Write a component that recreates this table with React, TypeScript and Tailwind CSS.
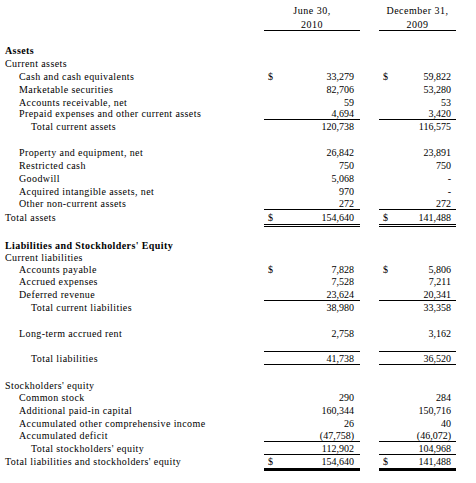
import React from 'react';

type Rule = 'none' | 'single' | 'double' | 'thick';

type Row = {
  label?: string;
  indent?: 0 | 1 | 2;
  bold?: boolean;
  a?: string;
  b?: string;
  dollar?: boolean;
  rule?: Rule;
  h: 12 | 13 | 14 | 16 | 17;
};

const heights = {
  12: 'h-[12px]',
  13: 'h-[13px]',
  14: 'h-[14px]',
  16: 'h-[16px]',
  17: 'h-[17px]',
};

const indents = {
  0: 'pl-[5px]',
  1: 'pl-[19px]',
  2: 'pl-[31px]',
};

const cellRules: Record<Rule, string> = {
  none: '',
  single: 'border-b border-black',
  double: 'border-b-[3px] border-double border-black',
  thick: 'border-b-[3px] border-black',
};

const labelRules: Record<Rule, string> = {
  none: '',
  single: 'border-b border-transparent',
  double: 'border-b-[3px] border-transparent',
  thick: 'border-b-[3px] border-transparent',
};

const rows: Row[] = [
  { h: 13 },
  { label: 'Assets', bold: true, h: 13 },
  { label: 'Current assets', h: 13 },
  { label: 'Cash and cash equivalents', indent: 1, dollar: true, a: '33,279', b: '59,822', h: 13 },
  { label: 'Marketable securities', indent: 1, a: '82,706', b: '53,280', h: 13 },
  { label: 'Accounts receivable, net', indent: 1, a: '59', b: '53', h: 12 },
  { label: 'Prepaid expenses and other current assets', indent: 1, a: '4,694', b: '3,420', rule: 'single', h: 12 },
  { label: 'Total current assets', indent: 2, a: '120,738', b: '116,575', h: 13 },
  { h: 13 },
  { label: 'Property and equipment, net', indent: 1, a: '26,842', b: '23,891', h: 13 },
  { label: 'Restricted cash', indent: 1, a: '750', b: '750', h: 13 },
  { label: 'Goodwill', indent: 1, a: '5,068', b: '-', h: 13 },
  { label: 'Acquired intangible assets, net', indent: 1, a: '970', b: '-', h: 12 },
  { label: 'Other non-current assets', indent: 1, a: '272', b: '272', rule: 'single', h: 13 },
  { label: 'Total assets', dollar: true, a: '154,640', b: '141,488', rule: 'double', h: 17 },
  { h: 12 },
  { label: "Liabilities and Stockholders' Equity", bold: true, h: 12 },
  { label: 'Current liabilities', h: 12 },
  { label: 'Accounts payable', indent: 1, dollar: true, a: '7,828', b: '5,806', h: 12 },
  { label: 'Accrued expenses', indent: 1, a: '7,528', b: '7,211', h: 13 },
  { label: 'Deferred revenue', indent: 1, a: '23,624', b: '20,341', rule: 'single', h: 13 },
  { label: 'Total current liabilities', indent: 2, a: '38,980', b: '33,358', h: 13 },
  { h: 13 },
  { label: 'Long-term accrued rent', indent: 1, a: '2,758', b: '3,162', h: 13 },
  { rule: 'single', h: 12 },
  { label: 'Total liabilities', indent: 2, a: '41,738', b: '36,520', rule: 'single', h: 13 },
  { h: 14 },
  { label: "Stockholders' equity", h: 12 },
  { label: 'Common stock', indent: 1, a: '290', b: '284', h: 13 },
  { label: 'Additional paid-in capital', indent: 1, a: '160,344', b: '150,716', h: 13 },
  { label: 'Accumulated other comprehensive income', indent: 1, a: '26', b: '40', h: 13 },
  { label: 'Accumulated deficit', indent: 1, a: '(47,758)', b: '(46,072)', rule: 'single', h: 12 },
  { label: "Total stockholders' equity", indent: 2, a: '112,902', b: '104,968', rule: 'single', h: 13 },
  { label: "Total liabilities and stockholders' equity", dollar: true, a: '154,640', b: '141,488', rule: 'thick', h: 16 },
];

function Cell({ width, value, dollar, rule, pr }: { width: string; value?: string; dollar?: boolean; rule: Rule; pr: string }) {
  return (
    <div className={`${width} h-full flex items-center justify-between ${cellRules[rule]}`}>
      <span className={dollar ? 'pl-[4px]' : 'pl-[4px] invisible'}>$</span>
      <span className={pr}>{value}</span>
    </div>
  );
}

export default function App() {
  return (
    <div className="w-[476px] h-[483px] bg-white text-black font-['Liberation_Serif',serif] text-[10px] leading-[13px]">
      {/* Column headings */}
      <div className="flex pt-[4px]">
        <div className="w-[264px]" />
        <div className="w-[96px] text-center border-b border-black tracking-[0.5px]">
          <div className="h-[14px]">June 30,</div>
          <div className="h-[12px]">2010</div>
        </div>
        <div className="w-[19px]" />
        <div className="w-[77px] text-center border-b border-black tracking-[0.5px]">
          <div className="h-[14px]">December 31,</div>
          <div className="h-[12px]">2009</div>
        </div>
      </div>

      {rows.map((r, i) => {
        const rule = r.rule ?? 'none';
        return (
          <div key={i} className={`flex ${heights[r.h]}`}>
            <div
              className={`w-[264px] h-full flex items-center whitespace-nowrap tracking-[0.4px] ${indents[r.indent ?? 0]} ${r.bold ? 'font-bold' : ''} ${labelRules[rule]}`}
            >
              {r.label}
            </div>
            <Cell width="w-[96px]" value={r.a} dollar={r.dollar} rule={rule} pr="pr-[6px]" />
            <div className="w-[19px]" />
            <Cell width="w-[77px]" value={r.b} dollar={r.dollar} rule={rule} pr="pr-[5px]" />
          </div>
        );
      })}
    </div>
  );
}
